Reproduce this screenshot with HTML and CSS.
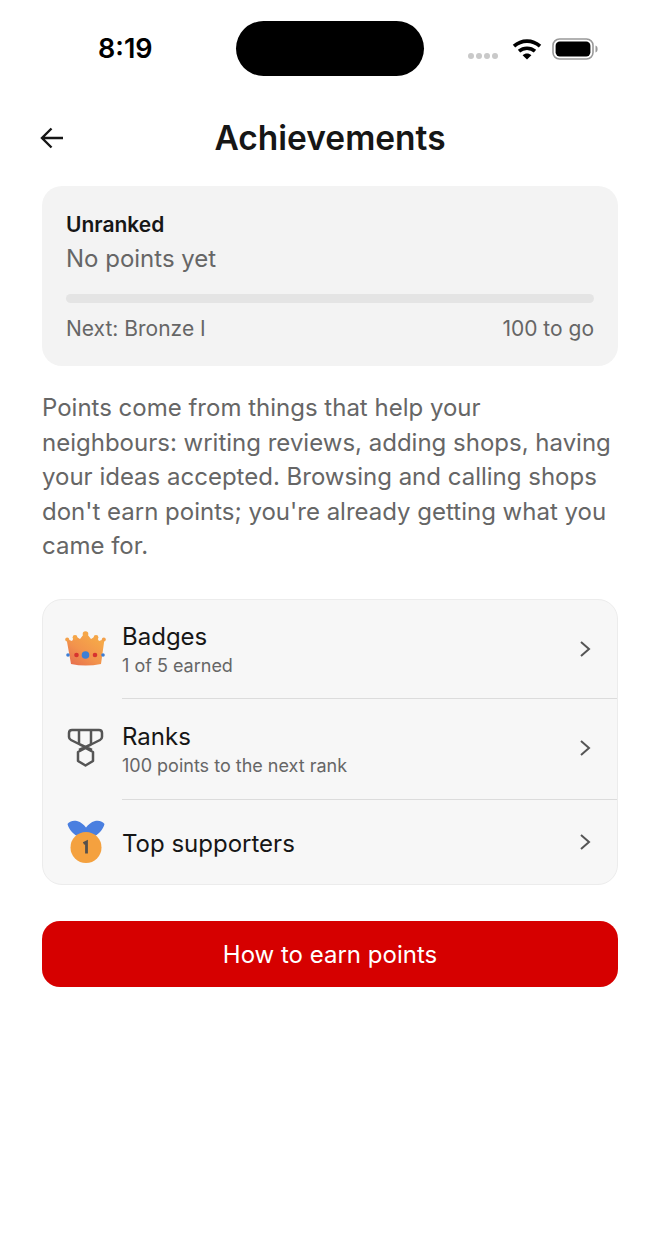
FILE: index.html
```html
<!DOCTYPE html>
<html lang="en">
<head>
  <meta charset="UTF-8">
  <meta name="viewport" content="width=device-width, initial-scale=1.0">
  <title>Achievements</title>
  <link rel="stylesheet" href="styles.css">
</head>
<body>
  <div class="status-bar">
    <div class="time">8:19</div>
    <div class="island"></div>
    <div class="status-icons">
      <div class="signal"><span></span><span></span><span></span><span></span></div>
      <svg class="wifi" width="30" height="22" viewBox="0 0 30 22">
        <path d="M2 8.2C9.5 1.4 20.5 1.4 28 8.2" fill="none" stroke="#000" stroke-width="3.6"/>
        <path d="M7 13.2C11.6 9.2 18.4 9.2 23 13.2" fill="none" stroke="#000" stroke-width="3.6"/>
        <path d="M10.6 17.2L15 21.4L19.4 17.2C16.8 14.8 13.2 14.8 10.6 17.2Z" fill="#000"/>
      </svg>
      <svg class="battery" width="46" height="22" viewBox="0 0 46 22">
        <rect x="1" y="1" width="40" height="20" rx="6.5" fill="#fff" stroke="#999" stroke-width="1.6"/>
        <rect x="3.6" y="3.6" width="34.8" height="14.8" rx="4.2" fill="#000"/>
        <path d="M43.5 7.5C45 8 45.6 9.4 45.6 11C45.6 12.6 45 14 43.5 14.5Z" fill="#999"/>
      </svg>
    </div>
  </div>

  <div class="header">
    <svg class="back" width="26" height="24" viewBox="0 0 26 24">
      <path d="M24 12H3M12.5 2.5L3 12L12.5 21.5" fill="none" stroke="#161616" stroke-width="2.4"/>
    </svg>
    <h1>Achievements</h1>
  </div>

  <div class="content">
    <div class="rank-card">
      <div class="rank-name">Unranked</div>
      <div class="rank-points">No points yet</div>
      <div class="progress"></div>
      <div class="rank-next">
        <span>Next: Bronze I</span>
        <span>100 to go</span>
      </div>
    </div>

    <p class="intro">Points come from things that help your neighbours: writing reviews, adding shops, having your ideas accepted. Browsing and calling shops don't earn points; you're already getting what you came for.</p>

    <div class="list">
      <div class="row row-badges">
        <svg class="row-icon" width="44" height="38" viewBox="0 0 44 38">
          <defs>
            <linearGradient id="crownFill" x1="0" y1="1" x2="0.75" y2="0.1">
              <stop offset="0" stop-color="#e5684f"/>
              <stop offset="0.5" stop-color="#f2934c"/>
              <stop offset="1" stop-color="#f6aa48"/>
            </linearGradient>
          </defs>
          <path d="M2.500 9L8 11L11 6L16 9L21.500 2L27 9L32 6L35 11L40.500 9L37 34Q21.500 37 7 34Z" fill="url(#crownFill)"/>
          <circle cx="21.500" cy="4" r="2.800" fill="#f5a648"/>
          <circle cx="11" cy="7.500" r="2.400" fill="#f5a648"/>
          <circle cx="32" cy="7.500" r="2.400" fill="#f5a648"/>
          <circle cx="3.200" cy="9.500" r="2" fill="#f3a04a"/>
          <circle cx="39.800" cy="9.500" r="2" fill="#f3a04a"/>
          <circle cx="21.500" cy="25" r="3.800" fill="#3d7fd6"/>
          <circle cx="12.500" cy="25" r="2.300" fill="#d7332f"/>
          <circle cx="31" cy="25" r="2.300" fill="#d7332f"/>
          <circle cx="4" cy="25" r="1.800" fill="#3d7fd6"/>
          <circle cx="39" cy="25" r="1.800" fill="#3d7fd6"/>
        </svg>
        <div class="row-text">
          <div class="row-title">Badges</div>
          <div class="row-sub">1 of 5 earned</div>
        </div>
        <svg class="chevron" width="12" height="18" viewBox="0 0 12 18"><path d="M2 2L10 9L2 16" fill="none" stroke="#555" stroke-width="2"/></svg>
      </div>
      <div class="row row-ranks">
        <svg class="row-icon" width="44" height="42" viewBox="0 0 44 42">
          <path d="M8 3H35Q38 3 38 6V10Q38 12 36 13L27 17.500L15 23M8 3Q5 3 5 6V10Q5 12 7 13L16 17.500L28 23" fill="none" stroke="#555" stroke-width="2.500" stroke-linejoin="round"/>
          <path d="M15 3V17M27 3V17" fill="none" stroke="#555" stroke-width="2.500"/>
          <path d="M21.500 21L29 25V34L21.500 38.500L14 34V25Z" fill="#f7f7f7" stroke="#555" stroke-width="2.500" stroke-linejoin="round"/>
        </svg>
        <div class="row-text">
          <div class="row-title">Ranks</div>
          <div class="row-sub">100 points to the next rank</div>
        </div>
        <svg class="chevron" width="12" height="18" viewBox="0 0 12 18"><path d="M2 2L10 9L2 16" fill="none" stroke="#555" stroke-width="2"/></svg>
      </div>
      <div class="row row-top">
        <svg class="row-icon" width="44" height="44" viewBox="0 0 44 44">
          <path d="M3.500 4C5 1.500 9 0 13 1C17 2 20 5 22 7.500C24 5 27 2 31 1C35 0 39 1.500 40.500 4C39 10 34 15 29 17H15C10 15 5 10 3.500 4Z" fill="#4a7fe0"/>
          <circle cx="22" cy="27.500" r="15.500" fill="#f4a13f"/>
          <path d="M19.500 23.500L22.500 22V33.500" fill="none" stroke="#55504c" stroke-width="2.800"/>
        </svg>
        <div class="row-text">
          <div class="row-title">Top supporters</div>
        </div>
        <svg class="chevron" width="12" height="18" viewBox="0 0 12 18"><path d="M2 2L10 9L2 16" fill="none" stroke="#555" stroke-width="2"/></svg>
      </div>
    </div>

    <button class="earn-btn">How to earn points</button>
  </div>
</body>
</html>
```

FILE: styles.css
```css
body {
  font-family: Inter, "Liberation Sans", sans-serif;
  background-color: #fff;
  color: #161616;
  margin: 0;
  padding: 0;
}
.status-bar {
  display: flex;
  align-items: center;
  height: 55px;
  padding: 21px 0 0 98px;
}
.time {
  width: 138px;
  font-size: 27px;
  font-weight: 600;
  color: #000;
}
.island {
  width: 188px;
  height: 55px;
  background: #000;
  border-radius: 28px;
}
.status-icons {
  display: flex;
  align-items: center;
  margin-left: 44px;
}
.signal {
  display: flex;
  gap: 2px;
  margin-top: 15px;
  margin-right: 14px;
}
.signal span {
  width: 6px;
  height: 6px;
  border-radius: 3px;
  background: #c9c9c9;
}
.wifi {
  margin-right: 10px;
}
.header {
  display: flex;
  align-items: center;
  justify-content: center;
  position: relative;
  height: 50px;
  margin-top: 37px;
}
.back {
  position: absolute;
  left: 39px;
  top: 13px;
}
h1 {
  font-size: 33.5px;
  font-weight: 600;
  margin: 0;
}
.content {
  padding: 23px 42px 0;
}
.rank-card {
  background: #f3f3f3;
  border-radius: 20px;
  padding: 26px 24px 24px;
  height: 180px;
  box-sizing: border-box;
}
.rank-name {
  font-size: 21px;
  font-weight: 600;
  line-height: 26px;
}
.rank-points {
  font-size: 24px;
  color: #666;
  line-height: 32px;
  margin-top: 5px;
}
.progress {
  height: 9px;
  background: #e4e4e4;
  border-radius: 5px;
  margin-top: 19px;
}
.rank-next {
  display: flex;
  justify-content: space-between;
  font-size: 21px;
  line-height: 28px;
  color: #666;
  margin-top: 12px;
}
.intro {
  font-size: 24px;
  line-height: 34.5px;
  color: #666;
  margin: 25px 0 0;
}
.list {
  background: #f7f7f7;
  border: 1px solid #ececec;
  border-radius: 20px;
  margin-top: 35px;
}
.row {
  display: flex;
  align-items: center;
  position: relative;
  padding: 0 26px 0 21px;
  box-sizing: border-box;
}
.row-badges {
  height: 98px;
}
.row-ranks {
  height: 101px;
}
.row-top {
  height: 85px;
  padding-top: 2px;
}
.row-badges::after, .row-ranks::after {
  content: "";
  position: absolute;
  left: 79px;
  right: 0;
  bottom: -1px;
  height: 1px;
  background: #dcdcdc;
}
.row-icon {
  flex: none;
  margin-right: 14px;
}
.row-text {
  flex: 1;
  margin-top: 3px;
}
.row-ranks .row-text {
  margin-top: 5px;
}
.row-title {
  font-size: 24px;
  line-height: 30px;
}
.row-sub {
  font-size: 18px;
  line-height: 26px;
  margin-top: 1px;
  color: #666;
}
.earn-btn {
  display: block;
  width: 100%;
  height: 66px;
  margin-top: 36px;
  padding-top: 3px;
  background-color: #d60000;
  color: #fff;
  border: none;
  border-radius: 18px;
  font-family: inherit;
  font-size: 24px;
  cursor: pointer;
}
```
